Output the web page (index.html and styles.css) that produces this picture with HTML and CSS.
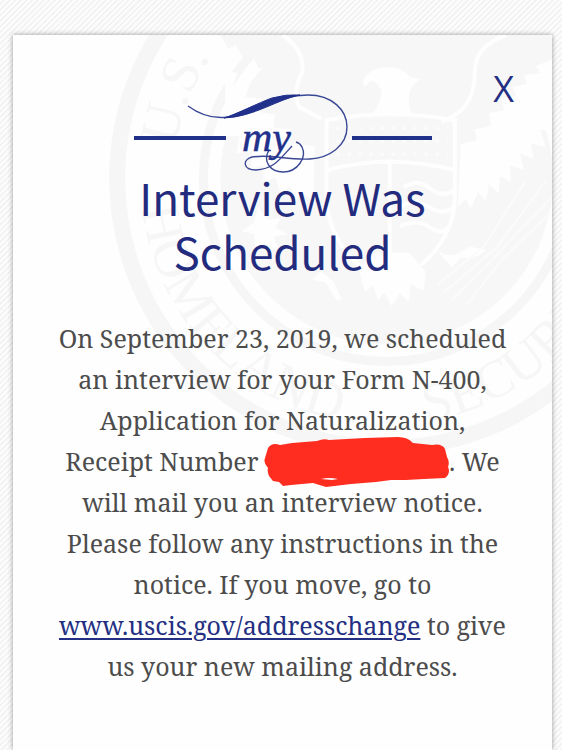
FILE: index.html
```html
<!DOCTYPE html>
<html lang="en">
<head>
<meta charset="utf-8">
<meta name="viewport" content="width=device-width, initial-scale=1">
<title>Interview Was Scheduled</title>
<link rel="stylesheet" href="styles.css">
</head>
<body>
<main class="card">
  <svg class="seal" viewBox="0 0 538 430" aria-hidden="true">
    <defs>
      <path id="arc-top" d="M160 143A213 213 0 0 1 586 143"/>
      <path id="arc-bottom" d="M127 143A246 246 0 0 0 619 143"/>
    </defs>
    <g class="seal-ring">
      <circle cx="373" cy="143" r="269" stroke-width="16"/>
      <circle cx="373" cy="143" r="183" stroke-width="9"/>
    </g>
    <circle class="seal-fill" cx="373" cy="143" r="166"/>
    <path class="seal-fill" d="M207 0L215 14L222 10L230 23L239 20L245 34L256 30L253 47L266 49L269 78L539 78V0Z"/>
    <g class="seal-line">
      <path d="M269 0Q291 15 289 36Q278 59 286 72L308 84"/>
      <path d="M493 0Q461 11 461 36Q461 68 441 80L428 87"/>
      <path d="M313 85Q376 73 441 85V165Q438 218 376 250Q317 220 313 165ZM313 135Q376 118 441 135M376 124V245M390 152Q404 143 416 153T441 155M388 171Q402 163 416 172T440 171M386 191Q403 183 416 192T436 190"/>
    </g>
    <path class="seal-dots" d="M323 93H434M323 106H434M323 119H434"/>
    <path class="seal-white" d="M349 46Q355 33 375 32Q389 33 397 42L407 44L399 50Q391 66 399 81Q376 75 354 83Q367 71 368 57Q362 43 356 47L351 52Z"/>
    <path class="seal-white" d="M539 24L522 31L526 38L510 40L513 49L499 52L502 61L488 64L490 75L475 78L477 91L461 94L463 105L447 109L444 171L452 164L457 173L464 157L472 166L475 149L485 158L486 141L497 147L496 130L510 135L506 118L520 124L517 108L532 112L526 94L539 97Z"/>
    <path class="seal-white" d="M211 35L224 38L220 50L236 51L232 62L249 64L246 77L261 79L260 92L277 94L277 108L301 111L300 166L289 159L283 165L276 151L267 158L262 142L250 147L250 130L237 134L239 116L223 118L226 101L213 101Z"/>
    <path class="seal-white" d="M345 233L351 256L360 250L364 265L371 257L378 271L386 258L395 266L397 249L410 255L412 236L395 217H362Z"/>
    <path class="seal-white" d="M424 216Q439 225 455 211L472 214Q463 225 447 222L438 232ZM307 236L320 246L328 264L323 265L312 247L299 244ZM245 172L254 185L267 183L262 193L275 199L260 201L266 217L251 207L242 219L241 199L228 196L240 188Z"/>
    <g class="seal-rays">
      <path d="M430 257L483 212L532 145M438 265L482 220L538 162M452 270L490 222L536 178M424 249L470 211L512 145"/>
    </g>
    <g class="seal-text">
      <text><textPath href="#arc-top" startOffset="32">U.S.</textPath></text>
      <text><textPath href="#arc-bottom" startOffset="30">HOMELAND</textPath></text>
      <text><textPath href="#arc-bottom" startOffset="426">SECURITY</textPath></text>
    </g>
  </svg>

  <button class="close" type="button" aria-label="Close">X</button>

  <svg class="logo" viewBox="0 0 298 80" role="img" aria-label="my">
    <path class="logo-bar" d="M0 45H92M218 45H298"/>
    <path class="logo-line" d="M54 13Q73 27 94 24C125 18 144 2 174 2C198 2 213 17 213 34C213 53 195 65 176 66C151 67 138 61 118 64C108 67 109 77 122 77C140 76 146 66 158 53"/>
    <path class="logo-swell" d="M90 25C103 21 124 10 138 5Q152 1 166 2C144 6 120 24 90 25Z"/>
    <path class="logo-line" d="M135 57C128 69 137 79 149 79C164 79 173 64 168 54Q166 50 162 49"/>
    <text class="logo-text" x="108" y="58">my</text>
  </svg>

  <h1 class="title">Interview Was Scheduled</h1>

  <p class="message">On September 23, 2019, we scheduled an interview for your Form N-400, Application for Naturalization, Receipt Number <span class="redacted"><svg class="scribble" viewBox="0 0 186 50" aria-hidden="true"><path d="M1 21L4 11Q8 5 16 8L28 6L53 4Q60 1 65 3L101 1L134 0Q144 0 149 6L168 8Q178 6 181 12L183 20Q186 25 184 30Q187 36 181 41L160 42L142 43L127 43L112 45L87 47L62 50L49 46L27 48L19 49L15 45L9 44L5 39Q3 34 4 31Q-1 26 1 21Z"/><path class="scribble-gap" d="M57 42Q65 40 74 42L68 43Z"/></svg></span>. We will mail you an interview notice. Please follow any instructions in the notice. If you move, go to <a class="link" href="#">www.uscis.gov/addresschange</a> to give us your new mailing address.</p>
</main>
</body>
</html>
```

FILE: styles.css
```css
* {
  box-sizing: border-box;
}

body {
  margin: 0;
  min-height: 100vh;
  display: flex;
  padding: 35px 10px 0 13px;
  background: repeating-linear-gradient(135deg, #fcfcfc 0, #fcfcfc 2px, #ececec 3px, #fcfcfc 4px);
}

.card {
  position: relative;
  flex: 1;
  min-width: 0;
  display: flex;
  flex-direction: column;
  align-items: center;
  padding: 58px 44px 0;
  overflow: hidden;
  background: #fefefe;
  box-shadow: 0 0 5px rgba(0, 0, 0, 0.4);
}

.seal {
  position: absolute;
  top: 0;
  left: 0;
  width: 100%;
}

.seal-ring {
  fill: none;
  stroke: #f6f6f6;
}

.seal-fill {
  fill: #f7f7f7;
}

.seal-white {
  fill: #fefefe;
}

.seal-text {
  fill: #f6f6f6;
  font: 54px "Liberation Serif", serif;
}

.seal-line {
  fill: none;
  stroke: #fefefe;
  stroke-width: 4;
}

.seal-dots {
  fill: none;
  stroke: #fcfcfc;
  stroke-width: 3;
  stroke-dasharray: 3 8;
}

.seal-rays {
  fill: none;
  stroke: #fbfbfb;
  stroke-width: 2;
}

.close {
  position: absolute;
  top: 36px;
  right: 38px;
  padding: 0;
  border: 0;
  background: none;
  color: #232f82;
  font: 36px/36px "Open Sans", sans-serif;
  cursor: pointer;
}

.logo {
  position: relative;
  width: 298px;
  height: 80px;
}

.logo-bar {
  stroke: #21308b;
  stroke-width: 4;
}

.logo-line {
  fill: none;
  stroke: #3a4795;
  stroke-width: 1.4;
}

.logo-swell {
  fill: #21308b;
  stroke: #21308b;
}

.logo-text {
  fill: #21308b;
  font: italic 42px "Liberation Serif", serif;
  stroke: #21308b;
  stroke-width: 0.5;
}

.title {
  position: relative;
  max-width: 320px;
  margin: -3px 0 0;
  color: #232b7e;
  font: 400 44px/54px "Noto Sans CJK SC", sans-serif;
  text-align: center;
}

.message {
  position: relative;
  margin: 40px 0 0;
  color: #4c4c4c;
  font: 25px/41px "Noto Serif", "Droid Serif", "Liberation Serif", serif;
  text-align: center;
}

.redacted {
  position: relative;
  display: inline-block;
  width: 184px;
  height: 20px;
}

.scribble {
  position: absolute;
  left: -1px;
  top: -14px;
  width: 186px;
  height: 50px;
  fill: #ff2d20;
}

.scribble-gap {
  fill: #fefefe;
}

.link {
  color: #232f82;
  text-decoration-thickness: 2px;
  text-underline-offset: 3px;
}
```
